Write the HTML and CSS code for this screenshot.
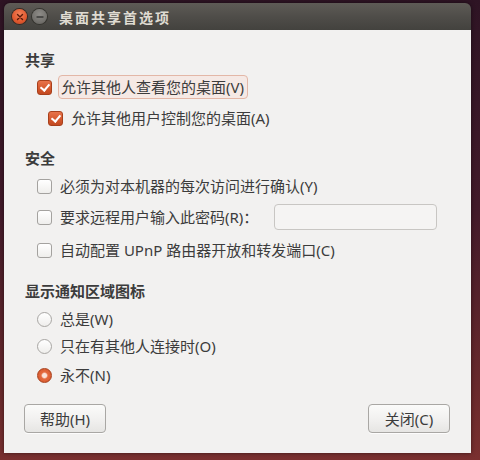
FILE: index.html
```html
<!DOCTYPE html>
<html lang="zh-CN">
<head>
<meta charset="utf-8">
<link rel="stylesheet" href="styles.css">
</head>
<body>
<div class="window">
  <div class="titlebar">
    <span class="wbtn close"><svg width="8" height="8" viewBox="0 0 8 8"><path d="M1.5 1.5 L6.5 6.5 M6.5 1.5 L1.5 6.5" stroke="#5a1a0a" stroke-width="1.4" stroke-linecap="round"/></svg></span>
    <span class="wbtn mini"><svg width="8" height="8" viewBox="0 0 8 8"><path d="M1 4 H7" stroke="#3a3a38" stroke-width="1.4" stroke-linecap="round"/></svg></span>
    <span class="title">桌面共享首选项</span>
  </div>
  <div class="content">
    <div class="header h-share">共享</div>
    <div class="row r1">
      <span class="check on"></span>
      <span class="label focus">允许其他人查看您的桌面(V)</span>
    </div>
    <div class="row r2">
      <span class="check on"></span>
      <span class="label">允许其他用户控制您的桌面(A)</span>
    </div>

    <div class="header h-sec">安全</div>
    <div class="row r3">
      <span class="check"></span>
      <span class="label">必须为对本机器的每次访问进行确认(Y)</span>
    </div>
    <div class="row r4">
      <span class="check"></span>
      <span class="label">要求远程用户输入此密码(R)：</span>
      <span class="entry"></span>
    </div>
    <div class="row r5">
      <span class="check"></span>
      <span class="label">自动配置 UPnP 路由器开放和转发端口(C)</span>
    </div>

    <div class="header h-tray">显示通知区域图标</div>
    <div class="row r6">
      <span class="radio"></span>
      <span class="label">总是(W)</span>
    </div>
    <div class="row r7">
      <span class="radio"></span>
      <span class="label">只在有其他人连接时(O)</span>
    </div>
    <div class="row r8">
      <span class="radio on"></span>
      <span class="label">永不(N)</span>
    </div>

    <div class="buttons">
      <span class="button">帮助(H)</span>
      <span class="button">关闭(C)</span>
    </div>
  </div>
</div>
</body>
</html>
```

FILE: styles.css
```css
html, body {
  margin: 0;
  padding: 0;
}
body {
  width: 480px;
  height: 460px;
  overflow: hidden;
  background: linear-gradient(180deg, #2e1424 0%, #421a2a 45%, #6a2a2c 85%, #7a3030 100%);
  font-family: "Noto Sans", "Noto Sans CJK SC", sans-serif;
  color: #3c3c3c;
  font-size: 15px;
}
.window {
  position: relative;
  margin: 3px 0 0 4px;
  width: 467px;
  box-shadow: 0 0 4px rgba(0,0,0,0.5);
  border-radius: 6px 6px 0 0;
}
.titlebar {
  height: 27px;
  border-radius: 6px 6px 0 0;
  background: linear-gradient(180deg, #5e5b56 0%, #4f4d49 50%, #43423e 100%);
  display: flex;
  align-items: center;
  padding-left: 8px;
}
.wbtn {
  width: 15px;
  height: 15px;
  border-radius: 50%;
  display: flex;
  align-items: center;
  justify-content: center;
  margin-right: 5px;
}
.wbtn.close {
  background: radial-gradient(circle at 50% 35%, #f2825a 0%, #e0582e 60%, #b8421f 100%);
  box-shadow: 0 0 0 1px #3a2a22;
}
.wbtn.mini {
  background: radial-gradient(circle at 50% 35%, #8e8c88 0%, #74726e 60%, #5e5c58 100%);
  box-shadow: 0 0 0 1px #35342f;
}
.title {
  margin-left: 7px;
  font-weight: bold;
  font-size: 14px;
  color: #dfdbd2;
  letter-spacing: 2px;
  font-family: "Noto Sans CJK SC", sans-serif;
}
.content {
  background: #f2f1f0;
  height: 423px;
  padding: 0 0 0 21px;
  box-sizing: border-box;
  display: flex;
  flex-direction: column;
}
.header {
  font-weight: bold;
  height: 20px;
  line-height: 20px;
  color: #3c3c3c;
}
.h-share { margin-top: 20px; }
.h-sec { margin-top: 18px; }
.h-tray { margin-top: 19px; }
.row {
  display: flex;
  align-items: center;
  height: 24px;
  padding-left: 12px;
}
.r1 { margin-top: 5px; }
.r2 { margin-top: 7px; padding-left: 23px; }
.r3 { margin-top: 6px; }
.r4 { margin-top: 5px; height: 28px; }
.r5 { margin-top: 7px; }
.r6 { margin-top: 6px; }
.r7 { margin-top: 3px; }
.r8 { margin-top: 5px; }
.label {
  margin-left: 8px;
  line-height: 20px;
  white-space: nowrap;
}
.focus {
  padding: 1px 3px 1px 2px;
  border: 1px solid #e3b7a7;
  background: #f5e9e5;
  border-radius: 4px;
  margin-left: 6px;
}
.check {
  width: 15px;
  height: 15px;
  box-sizing: border-box;
  border: 1px solid #a4a29f;
  border-radius: 3px;
  background: linear-gradient(180deg, #ffffff, #efeeec);
  flex: none;
  position: relative;
}
.check.on {
  border-color: #a8401c;
  background: linear-gradient(180deg, #e8734a 0%, #d4572c 60%, #c24a22 100%);
}
.check.on::after {
  content: "";
  position: absolute;
  left: 4px;
  top: 1px;
  width: 4px;
  height: 7px;
  border: solid #ffffff;
  border-width: 0 2px 2px 0;
  transform: rotate(40deg);
}
.radio {
  width: 15px;
  height: 15px;
  box-sizing: border-box;
  border: 1px solid #a8a6a3;
  border-radius: 50%;
  background: linear-gradient(180deg, #ffffff, #efeeec);
  flex: none;
  position: relative;
}
.radio.on {
  border-color: #a8401c;
  background: radial-gradient(circle, #fbe3d8 0%, #fbe3d8 22%, #e56a3e 38%, #cf5026 100%);
}
.entry {
  margin-left: 16px;
  width: 163px;
  height: 26px;
  box-sizing: border-box;
  border: 1px solid #c8c6c3;
  border-radius: 4px;
  background: #f5f4f3;
}
.buttons {
  margin-top: auto;
  margin-bottom: 20px;
  margin-left: -1px;
  display: flex;
  justify-content: space-between;
  padding-right: 21px;
}
.button {
  width: 82px;
  height: 29px;
  box-sizing: border-box;
  border: 1px solid #a9a7a4;
  border-radius: 4px;
  background: linear-gradient(180deg, #fbfbfa 0%, #f0efee 60%, #e6e5e3 100%);
  display: flex;
  align-items: center;
  justify-content: center;
  color: #3c3c3c;
  box-shadow: 0 1px 0 rgba(255,255,255,0.8);
}
```
